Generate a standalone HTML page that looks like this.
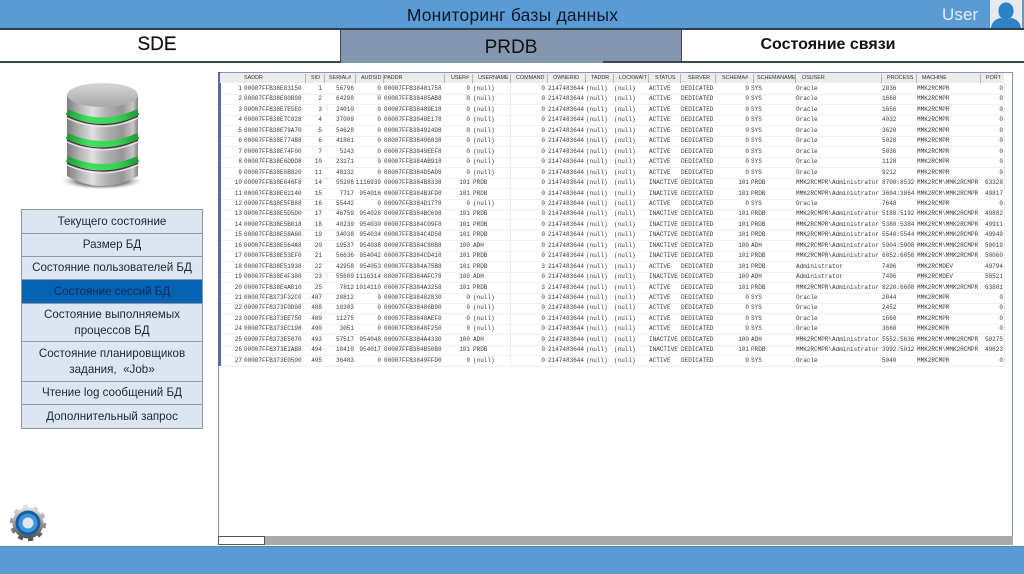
<!DOCTYPE html>
<html lang="ru"><head><meta charset="utf-8"><title>Мониторинг базы данных</title>
<style>
html,body{margin:0;padding:0;background:#fff}
#p{position:relative;width:1024px;height:574px;overflow:hidden;background:#fff;font-family:"Liberation Sans",sans-serif}
.a{position:absolute}
#top{left:0;top:0;width:1024px;height:28px;background:#5b9bd5}
#title{left:300px;width:425px;top:3px;text-align:center;font-size:17.4px;line-height:24px;color:#0c1726;letter-spacing:.25px}
#user{left:942px;top:2px;font-size:17px;line-height:25px;color:#e4edf7;letter-spacing:.1px}
#tab-line{left:0;top:28px;width:1024px;height:2px;background:#2f3f52}
.tab{top:30px;height:32px;text-align:center;line-height:31px;color:#111}
#bot-line{left:0;top:61px;width:340px;height:2px;background:#3d4654}
#bot-line2{left:603px;top:61px;width:421px;height:2px;background:#3d4654}
#side{left:21px;top:209px;width:182px;height:220px;background:#dce6f1}
.m{position:absolute;left:0;width:182px;box-sizing:border-box;border:1px solid #8e979f;text-align:center;font-size:11.6px;line-height:15.5px;color:#1f2630;display:flex;align-items:center;justify-content:center;background:#dce6f1}
.m.s{background:#0563b4;color:#0b2c60}
#panel{left:218px;top:72px;width:795px;height:473px;box-sizing:border-box;border:1px solid #7f95bd;border-top:1px solid #7f9ab8;background:#fff}
#lb{left:218px;top:72px;width:3px;height:294px;background:#6267ad}
#head{left:220px;top:73px;width:784px;height:10px;background:#ececec}
#t{left:0;top:0;width:1024px;height:574px;filter:blur(.38px)}
.h{position:absolute;top:73px;font-size:5.4px;line-height:10px;color:#333;white-space:pre}
.v{position:absolute;top:83px;width:1px;height:282px;background:#ececec}
.vh{position:absolute;top:74px;width:1px;height:9px;background:#b8b8b8}
.r{position:absolute;left:0;width:1024px;height:10px;font:6px/10px "Liberation Mono",monospace;color:#3a3a3a;white-space:pre}
.r:after{content:"";position:absolute;left:221px;width:783px;top:10px;height:1px;background:#f1f1f1}
.r span{position:absolute}
.r span:nth-child(1){right:782px}
.r span:nth-child(2){left:244px}
.r span:nth-child(3){right:702px}
.r span:nth-child(4){right:670px}
.r span:nth-child(5){right:643px}
.r span:nth-child(6){left:384px}
.r span:nth-child(7){right:554px}
.r span:nth-child(8){left:473px}
.r span:nth-child(9){right:479px}
.r span:nth-child(10){left:548px}
.r span:nth-child(11){left:586px}
.r span:nth-child(12){left:614px}
.r span:nth-child(13){left:649px}
.r span:nth-child(14){left:681px}
.r span:nth-child(15){right:275px}
.r span:nth-child(16){left:751px}
.r span:nth-child(17){left:796px}
.r span:nth-child(18){left:882px}
.r span:nth-child(19){left:917px}
.r span:nth-child(20){right:21px}
#sb{left:218px;top:536px;width:795px;height:9px;background:#aaa}
#th{left:218px;top:536px;width:47px;height:9px;box-sizing:border-box;border:1px solid #555;background:#fff}
#foot{left:0;top:546px;width:1024px;height:28px;background:#5b9bd5;border-top:1px solid #4d86bb;box-sizing:border-box}
</style></head><body><div id="p">
<div class="a" id="top"></div>
<div class="a" id="title">Мониторинг базы данных</div>
<div class="a" id="user">User</div>
<svg class="a" style="left:990px;top:0" width="32" height="28" viewBox="0 0 32 28"><rect width="32" height="28" fill="#e9e9ea"/><ellipse cx="16" cy="11" rx="7.6" ry="8.6" fill="#2d82c6"/><path d="M1 28C2 21 7 18.5 11 18C13 20 19 20 21 18C25 18.500 30 21 31 28Z" fill="#2d82c6"/></svg>
<div class="a" id="tab-line"></div>
<div class="a tab" style="left:0;width:340px;background:#fff"></div>
<div class="a tab" style="left:97px;width:120px;font-size:19px;line-height:29px;-webkit-text-stroke:.2px #111">SDE</div>
<div class="a tab" style="left:340px;width:342px;height:33px;background:#8497b0;font-size:19px;line-height:36px;border-left:1px solid #3d4654;border-right:1px solid #3d4654;box-sizing:border-box">PRDB</div>
<div class="a tab" style="left:683px;width:341px;background:#fff"></div>
<div class="a tab" style="left:708px;width:240px;font-size:16px;font-weight:bold;line-height:29px">Состояние связи</div>
<div class="a" id="bot-line"></div><div class="a" id="bot-line2"></div>

<svg class="a" style="left:50px;top:75px" width="104" height="120" viewBox="50 75 104 120">
<defs>
<linearGradient id="g" x1="0" x2="1" y1="0" y2="0"><stop offset="0" stop-color="#7c7c7c"/><stop offset=".18" stop-color="#b4b4b4"/><stop offset=".36" stop-color="#e0e0e0"/><stop offset=".55" stop-color="#b2b2b2"/><stop offset=".78" stop-color="#969696"/><stop offset=".93" stop-color="#c6c6c6"/><stop offset="1" stop-color="#828282"/></linearGradient>
<linearGradient id="gt" x1="0" x2="0" y1="0" y2="1"><stop offset="0" stop-color="#d6d6d6"/><stop offset="1" stop-color="#a8a8a8"/></linearGradient>
<linearGradient id="gr" x1="0" x2="1" y1="0" y2="0"><stop offset="0" stop-color="#1f9a35"/><stop offset=".3" stop-color="#3fe05c"/><stop offset=".7" stop-color="#36d452"/><stop offset="1" stop-color="#1e9a34"/></linearGradient>
<radialGradient id="sh"><stop offset=".6" stop-color="#888"/><stop offset="1" stop-color="#fff" stop-opacity="0"/></radialGradient>
</defs>
<ellipse cx="102" cy="181" rx="43" ry="9" fill="url(#sh)"/>
<path d="M67 95V176Q102 196 138 176V95Z" fill="url(#g)"/>
<g fill="none">
<path d="M67 112Q102 129 138 112" stroke="url(#gr)" stroke-width="6"/>
<path d="M67 116Q102 133 138 116" stroke="#333" stroke-width="1.200"/>
<path d="M67 118Q102 135 138 118" stroke="#eee" stroke-width="1"/>
<path d="M67 136Q102 152 138 136" stroke="url(#gr)" stroke-width="6"/>
<path d="M67 140Q102 156 138 140" stroke="#333" stroke-width="1.200"/>
<path d="M67 142Q102 158 138 142" stroke="#eee" stroke-width="1"/>
<path d="M67 159Q102 175 138 159" stroke="url(#gr)" stroke-width="6"/>
<path d="M67 163Q102 179 138 163" stroke="#333" stroke-width="1.200"/>
<path d="M67 165Q102 181 138 165" stroke="#eee" stroke-width="1"/>
</g>
<ellipse cx="102.500" cy="95" rx="35.500" ry="12" fill="url(#gt)"/>
</svg>

<div class="a" id="side">
<div class="m" style="top:0;height:25px">Текущего состояние</div>
<div class="m" style="top:24px;height:24px">Размер БД</div>
<div class="m" style="top:47px;height:24px">Состояние пользователей БД</div>
<div class="m s" style="top:70px;height:25px">Состояние сессий БД</div>
<div class="m" style="top:94px;height:39px">Состояние выполняемых<br>процессов БД</div>
<div class="m" style="top:132px;height:41px">Состояние планировщиков<br>задания, &nbsp;«Job»</div>
<div class="m" style="top:172px;height:24px">Чтение log сообщений БД</div>
<div class="m" style="top:195px;height:25px">Дополнительный запрос</div>
</div>

<svg class="a" style="left:8px;top:502px" width="40" height="42" viewBox="0 0 40 42">
<defs><linearGradient id="gg" x1="0" x2="0" y1="0" y2="1"><stop offset="0" stop-color="#e2e2e2"/><stop offset=".5" stop-color="#9a9a9a"/><stop offset="1" stop-color="#505050"/></linearGradient></defs>
<circle cx="20" cy="21" r="15.500" fill="url(#gg)"/>
<circle cx="20" cy="21" r="16.500" fill="none" stroke="url(#gg)" stroke-width="3.500" stroke-dasharray="5 5.360"/>
<circle cx="20" cy="21" r="12.500" fill="#155f9f"/>
<circle cx="20" cy="21" r="9.500" fill="#3f97da"/>
<circle cx="20" cy="21" r="5.500" fill="#dfe8ee"/>
</svg>

<div class="a" id="panel"></div>
<div class="a" id="lb"></div>
<div class="a" id="head"></div>
<div class="a" id="sb"></div><div class="a" id="th"></div>
<div class="a" id="foot"></div>

<div class="a" id="t">
<i class="v" style="left:510px"></i><i class="v" style="left:1004px"></i>
<i class="vh" style="left:305px"></i><i class="vh" style="left:324px"></i><i class="vh" style="left:355px"></i><i class="vh" style="left:383px"></i><i class="vh" style="left:444px"></i><i class="vh" style="left:472px"></i><i class="vh" style="left:510px"></i><i class="vh" style="left:547px"></i><i class="vh" style="left:585px"></i><i class="vh" style="left:613px"></i><i class="vh" style="left:648px"></i><i class="vh" style="left:680px"></i><i class="vh" style="left:715px"></i><i class="vh" style="left:753px"></i><i class="vh" style="left:795px"></i><i class="vh" style="left:881px"></i><i class="vh" style="left:916px"></i><i class="vh" style="left:980px"></i>
<span class="h" style="left:244px">SADDR</span>
<span class="h" style="left:311px">SID</span>
<span class="h" style="left:329px">SERIAL#</span>
<span class="h" style="left:361px">AUDSID</span>
<span class="h" style="left:384px">PADDR</span>
<span class="h" style="left:451px">USER#</span>
<span class="h" style="left:478px">USERNAME</span>
<span class="h" style="left:516px">COMMAND</span>
<span class="h" style="left:553px">OWNERID</span>
<span class="h" style="left:591px">TADDR</span>
<span class="h" style="left:619px">LOCKWAIT</span>
<span class="h" style="left:655px">STATUS</span>
<span class="h" style="left:688px">SERVER</span>
<span class="h" style="left:722px">SCHEMA#</span>
<span class="h" style="left:757px">SCHEMANAME</span>
<span class="h" style="left:802px">OSUSER</span>
<span class="h" style="left:887px">PROCESS</span>
<span class="h" style="left:922px">MACHINE</span>
<span class="h" style="left:986px">PORT</span>

<div class="r" style="top:84px"><span>1</span><span>00007FFB38E83150</span><span>1</span><span>56796</span><span>0</span><span>00007FFB38481758</span><span>0</span><span>(null)</span><span>0</span><span>2147483644</span><span>(null)</span><span>(null)</span><span>ACTIVE</span><span>DEDICATED</span><span>0</span><span>SYS</span><span>Oracle</span><span>2036</span><span>MMK2RCMPR</span><span>0</span></div>
<div class="r" style="top:94.45px"><span>2</span><span>00007FFB38E80B98</span><span>2</span><span>64298</span><span>0</span><span>00007FFB38485AB8</span><span>0</span><span>(null)</span><span>0</span><span>2147483644</span><span>(null)</span><span>(null)</span><span>ACTIVE</span><span>DEDICATED</span><span>0</span><span>SYS</span><span>Oracle</span><span>1668</span><span>MMK2RCMPR</span><span>0</span></div>
<div class="r" style="top:104.9px"><span>3</span><span>00007FFB38E7E5E0</span><span>3</span><span>24010</span><span>0</span><span>00007FFB38489E18</span><span>0</span><span>(null)</span><span>0</span><span>2147483644</span><span>(null)</span><span>(null)</span><span>ACTIVE</span><span>DEDICATED</span><span>0</span><span>SYS</span><span>Oracle</span><span>1656</span><span>MMK2RCMPR</span><span>0</span></div>
<div class="r" style="top:115.35px"><span>4</span><span>00007FFB38E7C028</span><span>4</span><span>37009</span><span>0</span><span>00007FFB3848E178</span><span>0</span><span>(null)</span><span>0</span><span>2147483644</span><span>(null)</span><span>(null)</span><span>ACTIVE</span><span>DEDICATED</span><span>0</span><span>SYS</span><span>Oracle</span><span>4032</span><span>MMK2RCMPR</span><span>0</span></div>
<div class="r" style="top:125.8px"><span>5</span><span>00007FFB38E79A70</span><span>5</span><span>54628</span><span>0</span><span>00007FFB384924D8</span><span>0</span><span>(null)</span><span>0</span><span>2147483644</span><span>(null)</span><span>(null)</span><span>ACTIVE</span><span>DEDICATED</span><span>0</span><span>SYS</span><span>Oracle</span><span>3620</span><span>MMK2RCMPR</span><span>0</span></div>
<div class="r" style="top:136.25px"><span>6</span><span>00007FFB38E774B8</span><span>6</span><span>41861</span><span>0</span><span>00007FFB38496838</span><span>0</span><span>(null)</span><span>0</span><span>2147483644</span><span>(null)</span><span>(null)</span><span>ACTIVE</span><span>DEDICATED</span><span>0</span><span>SYS</span><span>Oracle</span><span>5020</span><span>MMK2RCMPR</span><span>0</span></div>
<div class="r" style="top:146.7px"><span>7</span><span>00007FFB38E74F00</span><span>7</span><span>5243</span><span>0</span><span>00007FFB3849EEF8</span><span>0</span><span>(null)</span><span>0</span><span>2147483644</span><span>(null)</span><span>(null)</span><span>ACTIVE</span><span>DEDICATED</span><span>0</span><span>SYS</span><span>Oracle</span><span>5036</span><span>MMK2RCMPR</span><span>0</span></div>
<div class="r" style="top:157.15px"><span>8</span><span>00007FFB38E6DDD8</span><span>10</span><span>23171</span><span>0</span><span>00007FFB384AB918</span><span>0</span><span>(null)</span><span>0</span><span>2147483644</span><span>(null)</span><span>(null)</span><span>ACTIVE</span><span>DEDICATED</span><span>0</span><span>SYS</span><span>Oracle</span><span>1128</span><span>MMK2RCMPR</span><span>0</span></div>
<div class="r" style="top:167.6px"><span>9</span><span>00007FFB38E6B820</span><span>11</span><span>48132</span><span>0</span><span>00007FFB384D5AD8</span><span>0</span><span>(null)</span><span>0</span><span>2147483644</span><span>(null)</span><span>(null)</span><span>ACTIVE</span><span>DEDICATED</span><span>0</span><span>SYS</span><span>Oracle</span><span>9212</span><span>MMK2RCMPR</span><span>0</span></div>
<div class="r" style="top:178.05px"><span>10</span><span>00007FFB38E646F8</span><span>14</span><span>55206</span><span>1116939</span><span>00007FFB384B8338</span><span>101</span><span>PRDB</span><span>0</span><span>2147483644</span><span>(null)</span><span>(null)</span><span>INACTIVE</span><span>DEDICATED</span><span>101</span><span>PRDB</span><span>MMK2RCMPR\Administrator</span><span>8700:8532</span><span>MMK2RCM\MMK2RCMPR</span><span>63328</span></div>
<div class="r" style="top:188.5px"><span>11</span><span>00007FFB38E62140</span><span>15</span><span>7717</span><span>954016</span><span>00007FFB384B3FD8</span><span>101</span><span>PRDB</span><span>0</span><span>2147483644</span><span>(null)</span><span>(null)</span><span>INACTIVE</span><span>DEDICATED</span><span>101</span><span>PRDB</span><span>MMK2RCMPR\Administrator</span><span>3604:3864</span><span>MMK2RCM\MMK2RCMPR</span><span>49817</span></div>
<div class="r" style="top:198.95px"><span>12</span><span>00007FFB38E5FB88</span><span>16</span><span>55442</span><span>0</span><span>00007FFB384D1778</span><span>0</span><span>(null)</span><span>0</span><span>2147483644</span><span>(null)</span><span>(null)</span><span>ACTIVE</span><span>DEDICATED</span><span>0</span><span>SYS</span><span>Oracle</span><span>7648</span><span>MMK2RCMPR</span><span>0</span></div>
<div class="r" style="top:209.4px"><span>13</span><span>00007FFB38E5D5D0</span><span>17</span><span>46759</span><span>954026</span><span>00007FFB384BC698</span><span>101</span><span>PRDB</span><span>0</span><span>2147483644</span><span>(null)</span><span>(null)</span><span>INACTIVE</span><span>DEDICATED</span><span>101</span><span>PRDB</span><span>MMK2RCMPR\Administrator</span><span>5188:5192</span><span>MMK2RCM\MMK2RCMPR</span><span>49882</span></div>
<div class="r" style="top:219.85px"><span>14</span><span>00007FFB38E5B018</span><span>18</span><span>40239</span><span>954030</span><span>00007FFB384C09F8</span><span>101</span><span>PRDB</span><span>0</span><span>2147483644</span><span>(null)</span><span>(null)</span><span>INACTIVE</span><span>DEDICATED</span><span>101</span><span>PRDB</span><span>MMK2RCMPR\Administrator</span><span>5380:5384</span><span>MMK2RCM\MMK2RCMPR</span><span>49911</span></div>
<div class="r" style="top:230.3px"><span>15</span><span>00007FFB38E58A60</span><span>19</span><span>34038</span><span>954034</span><span>00007FFB384C4D58</span><span>101</span><span>PRDB</span><span>0</span><span>2147483644</span><span>(null)</span><span>(null)</span><span>INACTIVE</span><span>DEDICATED</span><span>101</span><span>PRDB</span><span>MMK2RCMPR\Administrator</span><span>5540:5544</span><span>MMK2RCM\MMK2RCMPR</span><span>49949</span></div>
<div class="r" style="top:240.75px"><span>16</span><span>00007FFB38E564A8</span><span>20</span><span>19537</span><span>954038</span><span>00007FFB384C90B8</span><span>100</span><span>ADH</span><span>0</span><span>2147483644</span><span>(null)</span><span>(null)</span><span>INACTIVE</span><span>DEDICATED</span><span>100</span><span>ADH</span><span>MMK2RCMPR\Administrator</span><span>5904:5908</span><span>MMK2RCM\MMK2RCMPR</span><span>50019</span></div>
<div class="r" style="top:251.2px"><span>17</span><span>00007FFB38E53EF0</span><span>21</span><span>56636</span><span>954042</span><span>00007FFB384CD418</span><span>101</span><span>PRDB</span><span>0</span><span>2147483644</span><span>(null)</span><span>(null)</span><span>INACTIVE</span><span>DEDICATED</span><span>101</span><span>PRDB</span><span>MMK2RCMPR\Administrator</span><span>6052:6056</span><span>MMK2RCM\MMK2RCMPR</span><span>50060</span></div>
<div class="r" style="top:261.65px"><span>18</span><span>00007FFB38E51938</span><span>22</span><span>42958</span><span>954053</span><span>00007FFB384A75B8</span><span>101</span><span>PRDB</span><span>3</span><span>2147483644</span><span>(null)</span><span>(null)</span><span>ACTIVE</span><span>DEDICATED</span><span>101</span><span>PRDB</span><span>Administrator</span><span>7496</span><span>MMK2RCMDEV</span><span>49794</span></div>
<div class="r" style="top:272.1px"><span>19</span><span>00007FFB38E4F380</span><span>23</span><span>55609</span><span>1116314</span><span>00007FFB384AFC78</span><span>100</span><span>ADH</span><span>0</span><span>2147483644</span><span>(null)</span><span>(null)</span><span>INACTIVE</span><span>DEDICATED</span><span>100</span><span>ADH</span><span>Administrator</span><span>7496</span><span>MMK2RCMDEV</span><span>58521</span></div>
<div class="r" style="top:282.55px"><span>20</span><span>00007FFB38E4A810</span><span>25</span><span>7812</span><span>1014110</span><span>00007FFB384A3258</span><span>101</span><span>PRDB</span><span>3</span><span>2147483644</span><span>(null)</span><span>(null)</span><span>ACTIVE</span><span>DEDICATED</span><span>101</span><span>PRDB</span><span>MMK2RCMPR\Administrator</span><span>8220:6608</span><span>MMK2RCM\MMK2RCMPR</span><span>63801</span></div>
<div class="r" style="top:293px"><span>21</span><span>00007FFB373F32C0</span><span>487</span><span>20812</span><span>0</span><span>00007FFB38482830</span><span>0</span><span>(null)</span><span>0</span><span>2147483644</span><span>(null)</span><span>(null)</span><span>ACTIVE</span><span>DEDICATED</span><span>0</span><span>SYS</span><span>Oracle</span><span>2044</span><span>MMK2RCMPR</span><span>0</span></div>
<div class="r" style="top:303.45px"><span>22</span><span>00007FFB373F0D08</span><span>488</span><span>10303</span><span>0</span><span>00007FFB38486B90</span><span>0</span><span>(null)</span><span>0</span><span>2147483644</span><span>(null)</span><span>(null)</span><span>ACTIVE</span><span>DEDICATED</span><span>0</span><span>SYS</span><span>Oracle</span><span>2452</span><span>MMK2RCMPR</span><span>0</span></div>
<div class="r" style="top:313.9px"><span>23</span><span>00007FFB373EE750</span><span>489</span><span>11275</span><span>0</span><span>00007FFB3848AEF0</span><span>0</span><span>(null)</span><span>0</span><span>2147483644</span><span>(null)</span><span>(null)</span><span>ACTIVE</span><span>DEDICATED</span><span>0</span><span>SYS</span><span>Oracle</span><span>1660</span><span>MMK2RCMPR</span><span>0</span></div>
<div class="r" style="top:324.35px"><span>24</span><span>00007FFB373EC198</span><span>490</span><span>3051</span><span>0</span><span>00007FFB3848F250</span><span>0</span><span>(null)</span><span>0</span><span>2147483644</span><span>(null)</span><span>(null)</span><span>ACTIVE</span><span>DEDICATED</span><span>0</span><span>SYS</span><span>Oracle</span><span>3660</span><span>MMK2RCMPR</span><span>0</span></div>
<div class="r" style="top:334.8px"><span>25</span><span>00007FFB373E5070</span><span>493</span><span>57517</span><span>954048</span><span>00007FFB384A4330</span><span>100</span><span>ADH</span><span>0</span><span>2147483644</span><span>(null)</span><span>(null)</span><span>INACTIVE</span><span>DEDICATED</span><span>100</span><span>ADH</span><span>MMK2RCMPR\Administrator</span><span>5552:5636</span><span>MMK2RCM\MMK2RCMPR</span><span>50275</span></div>
<div class="r" style="top:345.25px"><span>26</span><span>00007FFB373E2AB8</span><span>494</span><span>10410</span><span>954017</span><span>00007FFB384B50B0</span><span>101</span><span>PRDB</span><span>0</span><span>2147483644</span><span>(null)</span><span>(null)</span><span>INACTIVE</span><span>DEDICATED</span><span>101</span><span>PRDB</span><span>MMK2RCMPR\Administrator</span><span>3992:5012</span><span>MMK2RCM\MMK2RCMPR</span><span>49623</span></div>
<div class="r" style="top:355.7px"><span>27</span><span>00007FFB373E0500</span><span>495</span><span>36483</span><span>0</span><span>00007FFB3849FFD0</span><span>0</span><span>(null)</span><span>0</span><span>2147483644</span><span>(null)</span><span>(null)</span><span>ACTIVE</span><span>DEDICATED</span><span>0</span><span>SYS</span><span>Oracle</span><span>5040</span><span>MMK2RCMPR</span><span>0</span></div>
</div>
</div></body></html>
